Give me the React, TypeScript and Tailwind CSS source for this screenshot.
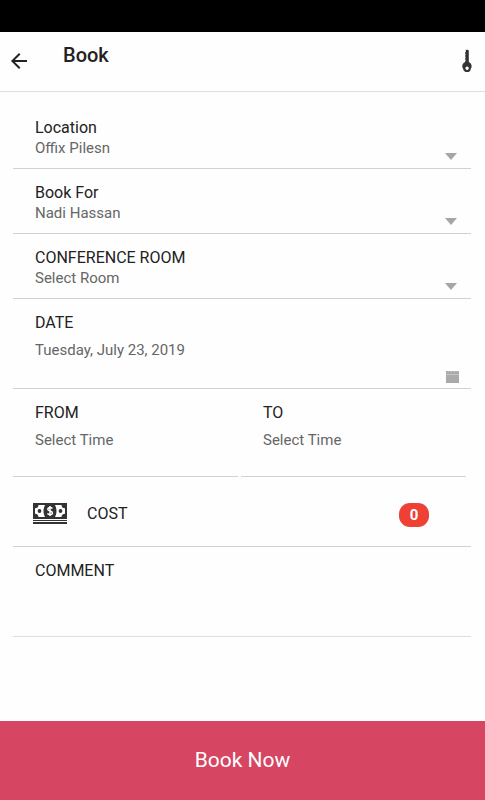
import { useState } from 'react';
import type { ReactNode } from 'react';
import { MdArrowBack } from 'react-icons/md';

const labelClass = 'block text-base leading-5 text-[#222222]';
const valueClass =
  'block w-full appearance-none bg-transparent p-0 text-[15px] leading-5 text-[#666666] outline-none placeholder:text-[#666666] placeholder:opacity-100';

function KeyIcon() {
  return (
    <svg viewBox="0 0 10 24" className="h-6 w-[10px]" fill="#333333" aria-hidden="true">
      <path
        fillRule="evenodd"
        d="M3.500 1.500 4.500.8h1.300l1 .8V13c1.800.8 2.800 2.300 2.800 4.200v.8c-.3 1-.9 1.700-.9 2.400C8.400 22 7 23 5.200 23S1.700 22 1.300 20.400c0-.7-.8-1.400-1-2.400v-.8c0-1.900 1-3.400 2.900-4.200v-1l.6-.6-.6-.8V9l.6-.5-.6-.8V6l.6-.5-.6-.8V3.200l.8-.5zM5.100 17.500a1.700 1.700 0 1 0 0 3.400 1.700 1.700 0 0 0 0-3.400z"
      />
    </svg>
  );
}

function MoneyIcon() {
  return (
    <svg viewBox="0 0 34 22" className="h-[22px] w-[34px]" aria-hidden="true">
      <path fill="#333333" d="M0 0h34v16H0zM0 17h34v1H0zM0 19h34v2H0z" />
      <path
        fill="#ffffff"
        d="M5.500 2H12c-2 3.600-2 8.400 0 12H5.500c0-2-1.300-3.300-3.500-3.300V5.300C4.200 5.300 5.500 4 5.500 2zM28.500 2H22c2 3.600 2 8.400 0 12h6.500c0-2 1.300-3.300 3.500-3.300V5.300c-2.200 0-3.500-1.300-3.500-3.300z"
      />
      <circle cx="6.500" cy="8" r="1.900" fill="#333333" />
      <circle cx="27.500" cy="8" r="1.900" fill="#333333" />
      <path
        fill="none"
        stroke="#ffffff"
        strokeWidth="1.500"
        d="M19.300 5.700c-.5-.8-1.300-1.100-2.300-1.100-1.300 0-2.200.7-2.200 1.700 0 2.400 4.600 1.100 4.600 3.600 0 1-.9 1.700-2.400 1.700-1.100 0-2-.4-2.500-1.300M17 3v10"
      />
    </svg>
  );
}

function CalendarIcon() {
  return (
    <svg viewBox="0 0 13 12" className="h-3 w-[13px]" aria-hidden="true">
      <path fill="#aaaaaa" d="M0 0h13v12H0z" />
      <path stroke="#c4c4c4" d="M0 3.500h13" />
      <path stroke="#cccccc" strokeDasharray="1 2" d="M2 .5h10" />
    </svg>
  );
}

function SelectField({ id, label, options }: { id: string; label: string; options: string[] }) {
  return (
    <div className="relative h-[65px] border-b border-[#d2d2d2] px-[22px] pt-[14px]">
      <label htmlFor={id} className={labelClass}>
        {label}
      </label>
      <select id={id} className={valueClass}>
        {options.map((option) => (
          <option key={option}>{option}</option>
        ))}
      </select>
      <svg
        viewBox="0 0 12 7"
        className="pointer-events-none absolute right-[14px] bottom-2 h-[7px] w-3"
        fill="#a6a6a6"
        aria-hidden="true"
      >
        <path d="M0 0h12L6 7z" />
      </svg>
    </div>
  );
}

function TimeField({ id, label }: { id: string; label: string }) {
  return (
    <div className="h-22 border-b border-[#d2d2d2] px-[22px] pt-[14px]">
      <label htmlFor={id} className={labelClass}>
        {label}
      </label>
      <input id={id} type="text" placeholder="Select Time" className={`mt-[7px] ${valueClass}`} />
    </div>
  );
}

function Row({ children }: { children: ReactNode }) {
  return (
    <div className="flex h-[70px] items-start justify-between border-b border-[#d2d2d2] pt-[26px] pr-[42px] pl-5">
      {children}
    </div>
  );
}

export default function App() {
  const [date, setDate] = useState('Tuesday, July 23, 2019');
  const [comment, setComment] = useState('');

  return (
    <div className="flex min-h-screen flex-col bg-[#fefefe] font-['Roboto',sans-serif]">
      <div className="h-8 bg-black" />
      <header className="flex h-15 items-start justify-between border-b border-[#dedede] pr-[13px] pl-[7px]">
        <div className="flex">
          <button type="button" aria-label="Back" className="mt-[17px] text-[#222222]">
            <MdArrowBack className="size-6" />
          </button>
          <h1 className="mt-[11px] ml-8 text-xl leading-6 font-medium text-[#222222]">Book</h1>
        </div>
        <button type="button" aria-label="Unlock" className="mt-[17px]">
          <KeyIcon />
        </button>
      </header>

      <form id="booking" className="mt-3 mr-[14px] ml-[13px] flex-1" onSubmit={(e) => e.preventDefault()}>
        <SelectField id="location" label="Location" options={['Offix Pilesn']} />
        <SelectField id="book-for" label="Book For" options={['Nadi Hassan']} />
        <SelectField id="room" label="CONFERENCE ROOM" options={['Select Room']} />

        <div className="relative h-[90px] border-b border-[#d2d2d2] px-[22px] pt-[14px]">
          <label htmlFor="date" className={labelClass}>
            DATE
          </label>
          <input
            id="date"
            type="text"
            value={date}
            onChange={(e) => setDate(e.target.value)}
            className={`mt-[7px] ${valueClass}`}
          />
          <button type="button" aria-label="Open calendar" className="absolute right-3 bottom-[5px]">
            <CalendarIcon />
          </button>
        </div>

        <div className="mr-[5px] grid grid-cols-2 gap-[3px]">
          <TimeField id="from" label="FROM" />
          <TimeField id="to" label="TO" />
        </div>

        <Row>
          <div className="flex items-center gap-5">
            <MoneyIcon />
            <label htmlFor="cost" className={labelClass}>
              COST
            </label>
          </div>
          <output
            id="cost"
            className="flex h-6 w-[30px] justify-center rounded-[11px] bg-[#ee4035] text-[15px] leading-6 font-bold text-white"
          >
            0
          </output>
        </Row>

        <div className="h-[90px] border-b border-[#dedede] px-[22px] pt-[14px]">
          <label htmlFor="comment" className={labelClass}>
            COMMENT
          </label>
          <textarea
            id="comment"
            rows={2}
            value={comment}
            onChange={(e) => setComment(e.target.value)}
            className={`mt-1 resize-none ${valueClass}`}
          />
        </div>
      </form>

      <button type="submit" form="booking" className="h-[79px] w-full bg-[#d64562] text-[21px] text-white">
        Book Now
      </button>
    </div>
  );
}
